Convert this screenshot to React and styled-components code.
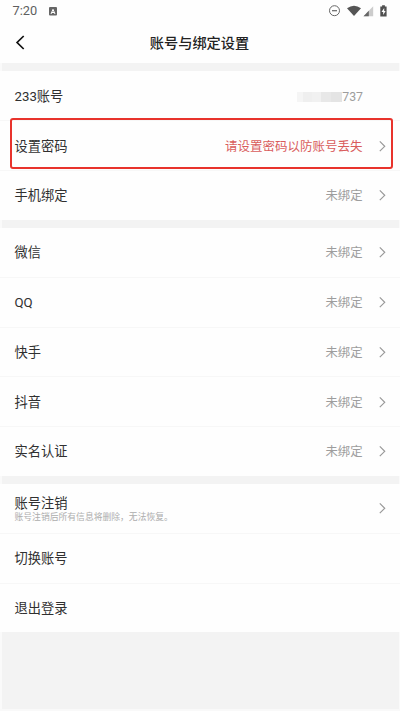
import styled, { createGlobalStyle, css } from "styled-components";

const GlobalStyle = createGlobalStyle`
  * {
    box-sizing: border-box;
  }
  body {
    margin: 0;
    background: #f3f3f3;
    font-family: Roboto, "Noto Sans CJK SC", sans-serif;
  }
`;

const Screen = styled.div`
  display: flex;
  flex-direction: column;
  height: 711px;
  overflow: hidden;
  background: #f3f3f3;
  border-bottom: 2px solid #f9f9f9;
  box-shadow: inset 2px 0 #fafafa, inset -1px 0 #fafafa;
`;

const TopArea = styled.div`
  height: 63px;
  flex-shrink: 0;
  background: #fefefe;
`;

const StatusBar = styled.div`
  display: flex;
  align-items: center;
  justify-content: space-between;
  height: 22px;
  padding: 0 12px 0 12.5px;
  color: #5f5f5f;
`;

const StatusGroup = styled.div`
  display: flex;
  align-items: center;
`;

const Clock = styled.span`
  font-size: 12.8px;
  line-height: 22px;
  width: 36px;
`;

const Header = styled.div`
  display: grid;
  grid-template-columns: 40px 1fr 41px;
  align-items: center;
  height: 41px;
`;

const BackButton = styled.button`
  display: flex;
  padding: 0 0 0 15px;
  border: 0;
  background: none;
`;

const Title = styled.h1`
  margin: 0;
  padding-top: 2px;
  font-size: 14.2px;
  line-height: 39px;
  font-weight: 500;
  text-align: center;
  color: #222;
`;

const Group = styled.div`
  margin-top: 7.8px;
  flex-shrink: 0;
  background: #fefefe;
`;

const Row = styled.div`
  display: flex;
  align-items: center;
  height: 49.65px;
  padding: 0 14px 0 14.5px;
  & + & {
    border-top: 1px solid #f7f7f7;
  }
`;

const Label = styled.div`
  flex: 1;
  padding-top: 2px;
  font-size: 13.25px;
  line-height: 18px;
  color: #303030;
`;

const Note = styled.div`
  margin-top: -1px;
  font-size: 8.8px;
  line-height: 11px;
  color: #adadad;
`;

const Value = styled.span`
  padding-top: 2px;
  font-size: 12.35px;
  line-height: 18px;
  color: #9d9d9d;
  margin-right: 16.5px;
  ${(props) =>
    props.$warning &&
    css`
      font-size: 12.5px;
      color: #d95c5c;
    `}
  ${(props) =>
    props.$plain &&
    css`
      display: flex;
      align-items: center;
      font-size: 12.3px;
      margin-right: 23px;
    `}
`;

const Mask = styled.span`
  width: 45px;
  height: 10px;
  background: linear-gradient(
    90deg,
    #f5f5f5 0 14%,
    #efefef 14% 34%,
    #f1f1f1 34% 54%,
    #e8e8e8 54% 76%,
    #e4e4e4 76%
  );
`;

const Highlight = styled.div`
  position: absolute;
  left: 10px;
  top: 118px;
  width: 383px;
  height: 51px;
  border: 2px solid #e8332c;
  border-radius: 3px;
`;

function Chevron() {
  return (
    <svg width="7" height="12" viewBox="0 0 7 12" fill="none">
      <path d="M0.8 1.4L5.7 6.3L0.8 11.2" stroke="#999" strokeWidth="1.2" />
    </svg>
  );
}

function StatusIcons() {
  return (
    <svg width="60" height="14" viewBox="0 0 60 14">
      <circle cx="6.5" cy="6.7" r="5" fill="none" stroke="#666" />
      <path d="M4 6.7h5" stroke="#666" strokeWidth="1.2" />
      <path d="M19 4.3Q26 -0.8 33 4.3L26 12Z" fill="#555" />
      <path d="M45.2 2.3V12.2H35.5Z" fill="#ccc" />
      <path d="M40.8 6.8V12.2H35.5Z" fill="#666" />
      <path d="M54.1 1.2h2.8v1.2h1.7v10.2h-6.3V2.4h1.8Z" fill="#505050" />
      <path d="M56.2 4L53.5 8H55.2V11L57.6 7H56.2Z" fill="#fff" />
    </svg>
  );
}

const accounts = ["微信", "QQ", "快手", "抖音", "实名认证"];

export default function App() {
  return (
    <Screen>
      <GlobalStyle />
      <TopArea>
        <StatusBar>
          <StatusGroup>
            <Clock>7:20</Clock>
            <svg width="8" height="9" viewBox="0 0 8 9">
              <rect width="8" height="8.6" rx="1" fill="#666" />
              <path
                d="M2 7L4 2.3L6 7M2.8 5.5H5.2"
                fill="none"
                stroke="#fff"
              />
            </svg>
          </StatusGroup>
          <StatusIcons />
        </StatusBar>
        <Header>
          <BackButton aria-label="返回">
            <svg width="10" height="15" viewBox="0 0 10 15" fill="none">
              <path d="M8.7 1L2.1 7.5L8.7 14" stroke="#111" strokeWidth="1.7" />
            </svg>
          </BackButton>
          <Title>账号与绑定设置</Title>
        </Header>
      </TopArea>
      <Group>
        <Row>
          <Label>233账号</Label>
          <Value $plain>
            <Mask />
            737
          </Value>
        </Row>
        <Row>
          <Label>设置密码</Label>
          <Value $warning>请设置密码以防账号丢失</Value>
          <Chevron />
        </Row>
        <Row>
          <Label>手机绑定</Label>
          <Value>未绑定</Value>
          <Chevron />
        </Row>
      </Group>
      <Group>
        {accounts.map((name) => (
          <Row key={name}>
            <Label>{name}</Label>
            <Value>未绑定</Value>
            <Chevron />
          </Row>
        ))}
      </Group>
      <Group>
        <Row>
          <Label>
            账号注销
            <Note>账号注销后所有信息将删除，无法恢复。</Note>
          </Label>
          <Chevron />
        </Row>
        <Row>
          <Label>切换账号</Label>
        </Row>
        <Row>
          <Label>退出登录</Label>
        </Row>
      </Group>
      <Highlight />
    </Screen>
  );
}
